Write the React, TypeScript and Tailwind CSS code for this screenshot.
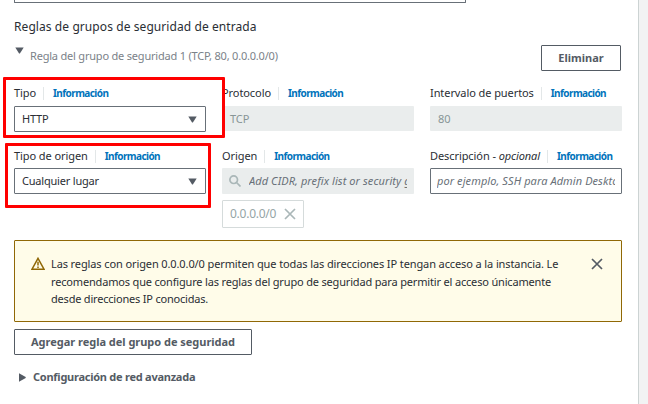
import React from 'react';

const Info = () => (
  <span className="ml-[7px] flex h-[13px] items-center border-l border-[#e3e7e8] pl-[9px] text-[10px] font-bold tracking-[-0.58px] text-[#0073bb]">
    Información
  </span>
);

const Label = ({ children }: { children: React.ReactNode }) => (
  <div className="flex h-[18px] items-center text-[11px] tracking-[-0.08px] text-[#2a2e34]">
    <span>{children}</span>
    <Info />
  </div>
);

const Caret = () => (
  <svg width="9" height="7" viewBox="0 0 9 7" fill="#545b64">
    <path d="M0.3 0.5h8.4L4.9 6.6h-0.8z" />
  </svg>
);

const Select = ({ value }: { value: string }) => (
  <div className="flex h-[26px] items-center justify-between rounded-[1px] border border-[#687078] bg-white pr-2 pl-[7px] text-[11px] tracking-[-0.2px] text-[#2a2e34]">
    <span>{value}</span>
    <Caret />
  </div>
);

const Disabled = ({ value }: { value: string }) => (
  <div className="flex h-[25px] items-center rounded-[1px] bg-[#eaeded] px-2 pt-px text-[11px] tracking-[-0.1px] text-[#879596]">
    {value}
  </div>
);

const Cross = ({ color }: { color: string }) => (
  <svg width="12" height="12" viewBox="0 0 12 12" fill="none" stroke={color} strokeWidth="1.7">
    <path d="M1 1l10 10M11 1L1 11" />
  </svg>
);

export default function App() {
  return (
    <div className="relative flex h-[404px] w-[648px] overflow-hidden bg-[#f2f3f3] font-['Noto_Sans',sans-serif] whitespace-nowrap">
      <main className="flex w-[639px] flex-col border-r border-[#ccd3d3] bg-white pr-4 pl-[14px]">
        <div className="h-[3px] w-[452px] rounded-b-[1px] border border-t-0 border-[#687078]" />
        <h2 className="mt-[14px] h-5 text-[12px] leading-5 tracking-[0.08px] text-[#2a2e34]">
          Reglas de grupos de seguridad de entrada
        </h2>
        <div className="mt-2 flex h-[26px]">
          <div className="mt-[2px] ml-px">
            <Caret />
          </div>
          <span className="ml-[6px] flex-1 text-[11px] leading-[22px] tracking-[-0.2px] text-[#7b8289]">
            Regla del grupo de seguridad 1 (TCP, 80, 0.0.0.0/0)
          </span>
          <button className="mr-px h-[26px] w-[80px] rounded-[1px] border border-[#545b64] text-[11px] font-bold text-[#545b64]">
            Eliminar
          </button>
        </div>
        <div className="mt-[13px] grid h-[48px] grid-cols-3 gap-4">
          <div className="flex flex-col gap-1">
            <Label>Tipo</Label>
            <Select value="HTTP" />
          </div>
          <div className="flex flex-col gap-1">
            <Label>Protocolo</Label>
            <Disabled value="TCP" />
          </div>
          <div className="flex flex-col gap-1">
            <Label>Intervalo de puertos</Label>
            <Disabled value="80" />
          </div>
        </div>
        <div className="mt-[15px] grid h-[81px] grid-cols-3 gap-4">
          <div className="flex flex-col gap-[3px]">
            <Label>Tipo de origen</Label>
            <Select value="Cualquier lugar" />
          </div>
          <div className="flex min-w-0 flex-col gap-[3px]">
            <Label>Origen</Label>
            <div className="flex h-[26px] items-center rounded-[1px] bg-[#eaeded] px-[7px] text-[11px] text-[#687078] italic">
              <svg width="12" height="12" viewBox="0 0 12 12" fill="none" stroke="#aab7b8" strokeWidth="1.7" className="shrink-0">
                <circle cx="4.7" cy="4.7" r="3.8" />
                <path d="M7.5 7.5l4 4" />
              </svg>
              <span className="ml-2 w-[158px] overflow-hidden tracking-[0.08px]">Add CIDR, prefix list or security group</span>
            </div>
            <div className="mt-[3px] flex h-[28px] w-[82px] shrink-0 items-center rounded-[1px] border border-[#d5dbdb] pl-[7px] text-[12px] tracking-[-0.25px] text-[#95a5a6]">
              <span className="w-[54px]">0.0.0.0/0</span>
              <Cross color="#aab7b8" />
            </div>
          </div>
          <div className="flex min-w-0 flex-col gap-[3px]">
            <Label>
              Descripción - <i>opcional</i>
            </Label>
            <div className="h-[26px] rounded-[1px] border border-[#687078] px-[6px] text-[11px] leading-6 tracking-[0.08px] text-[#687078] italic">
              <div className="overflow-hidden">por ejemplo, SSH para Admin Desktop</div>
            </div>
          </div>
        </div>
        <div className="mt-3 flex h-[82px] rounded-[1px] border border-[#906806] bg-[#fffce9] pt-[14px] pr-[18px] pl-4">
          <svg width="14" height="13" viewBox="0 0 14 13" fill="none" stroke="#906806" strokeWidth="1.5" className="mt-[2px]">
            <path d="M7 1.3L13 12.2H1z" />
            <path d="M7 4.8v3.7M7 9.4v1.5" />
          </svg>
          <p className="ml-[6px] flex-1 text-[11px] leading-[17.5px] text-[#2a2e34]">
            <span className="block tracking-[-0.11px]">
              Las reglas con origen 0.0.0.0/0 permiten que todas las direcciones IP tengan acceso a la instancia. Le
            </span>
            <span className="block tracking-[-0.17px]">
              recomendamos que configure las reglas del grupo de seguridad para permitir el acceso únicamente
            </span>
            <span className="block tracking-[-0.2px]">desde direcciones IP conocidas.</span>
          </p>
          <div className="mt-[3px]">
            <Cross color="#545b64" />
          </div>
        </div>
        <button className="mt-[7px] h-[26px] w-[238px] rounded-[1px] border border-[#545b64] text-[11px] font-bold tracking-[-0.02px] text-[#545b64]">
          Agregar regla del grupo de seguridad
        </button>
        <div className="mt-3 flex h-5 items-center pl-[5px] text-[11px] font-bold tracking-[-0.25px] text-[#545b64]">
          <svg width="7" height="9" viewBox="0 0 7 9" fill="#545b64">
            <path d="M0 0.3v8.4L6.7 4.9v-0.8z" />
          </svg>
          <span className="ml-[7px]">Configuración de red avanzada</span>
        </div>
      </main>
      <div className="absolute top-[77px] left-[3px] h-[61px] w-[222px] rounded-[1px] border-3 border-[#ff0000]" />
      <div className="absolute top-[143px] left-[5px] h-[65px] w-[206px] rounded-[1px] border-3 border-[#ff0000]" />
    </div>
  );
}
